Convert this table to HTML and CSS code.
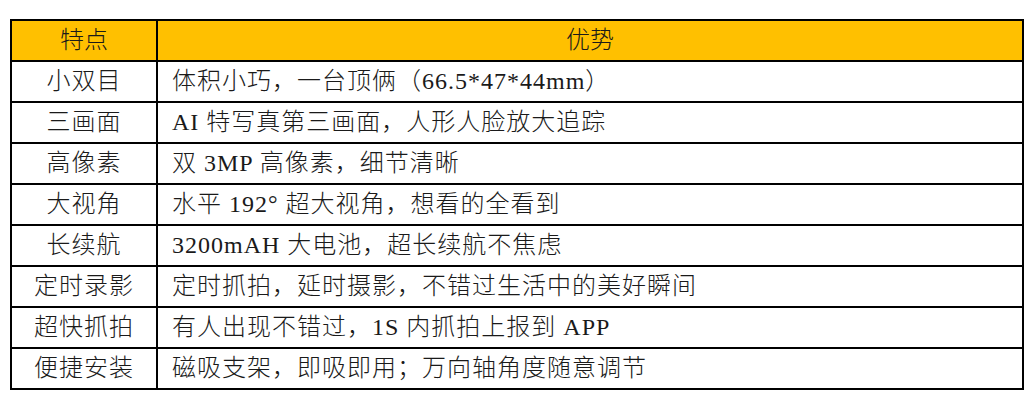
FILE: index.html
```html
<!DOCTYPE html>
<html lang="zh-CN">
<head>
<meta charset="utf-8">
<title>特点与优势</title>
<link rel="stylesheet" href="styles.css">
</head>
<body>
<table class="spec">
  <colgroup>
    <col class="c1">
    <col class="c2">
  </colgroup>
  <thead>
    <tr><th>特点</th><th>优势</th></tr>
  </thead>
  <tbody>
    <tr><td class="feat">小双目</td><td class="adv">体积小巧，一台顶俩（66.5*47*44mm）</td></tr>
    <tr><td class="feat">三画面</td><td class="adv">AI 特写真第三画面，人形人脸放大追踪</td></tr>
    <tr><td class="feat">高像素</td><td class="adv">双 3MP 高像素，细节清晰</td></tr>
    <tr><td class="feat">大视角</td><td class="adv">水平 192° 超大视角，想看的全看到</td></tr>
    <tr><td class="feat">长续航</td><td class="adv">3200mAH 大电池，超长续航不焦虑</td></tr>
    <tr><td class="feat">定时录影</td><td class="adv">定时抓拍，延时摄影，不错过生活中的美好瞬间</td></tr>
    <tr><td class="feat">超快抓拍</td><td class="adv">有人出现不错过，1S 内抓拍上报到 APP</td></tr>
    <tr><td class="feat">便捷安装</td><td class="adv">磁吸支架，即吸即用；万向轴角度随意调节</td></tr>
  </tbody>
</table>
</body>
</html>
```

FILE: styles.css
```css
html, body {
  margin: 0;
  padding: 0;
  background: #ffffff;
}

body {
  padding: 19px 0 0 10px;
  font-family: "Liberation Serif", "Noto Sans CJK SC", serif;
  color: #1a1a1a;
}

.spec {
  border-collapse: collapse;
  width: 1012px;
  table-layout: fixed;
}

.c1 { width: 146px; }
.c2 { width: 866px; }

.spec th,
.spec td {
  border: 2px solid #000000;
  height: 39px;
  padding: 0;
  font-size: 24px;
  font-weight: 300;
  line-height: 39px;
  vertical-align: middle;
  white-space: nowrap;
}

.spec thead th {
  background: #ffc000;
  text-align: center;
}

.feat {
  text-align: center;
  letter-spacing: 1px;
}

.adv {
  text-align: left;
  padding-left: 14px !important;
  letter-spacing: 1px;
}
```
